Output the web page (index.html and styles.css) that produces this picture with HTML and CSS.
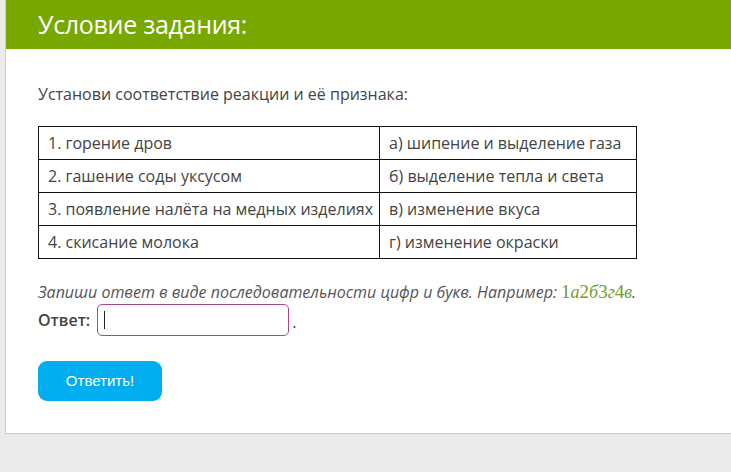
FILE: index.html
```html
<!DOCTYPE html>
<html lang="ru">
<head>
<meta charset="utf-8">
<title>Условие задания</title>
<link rel="stylesheet" href="styles.css">
</head>
<body>
<div class="card">
  <div class="header">Условие задания:</div>
  <div class="content">
    <p class="prompt">Установи соответствие реакции и её признака:</p>
    <table class="match">
      <tr><td class="c1">1. горение дров</td><td class="c2">а) шипение и выделение газа</td></tr>
      <tr><td class="c1">2. гашение соды уксусом</td><td class="c2">б) выделение тепла и света</td></tr>
      <tr><td class="c1">3. появление налёта на медных изделиях</td><td class="c2">в) изменение вкуса</td></tr>
      <tr><td class="c1">4. скисание молока</td><td class="c2">г) изменение окраски</td></tr>
    </table>
    <p class="hint">Запиши ответ в виде последовательности цифр и букв. Например: <span class="ex"><span class="d">1</span><i>а</i><span class="d">2</span><i>б</i><span class="d">3</span><i>г</i><span class="d">4</span><i>в</i></span>.</p>
    <div class="answer">
      <span class="label">Ответ:</span>
      <span class="field"><input class="input" type="text" aria-label="Ответ"></span>
      <span class="dot">.</span>
    </div>
    <button class="btn" type="button">Ответить!</button>
  </div>
</div>
</body>
</html>
```

FILE: styles.css
```css
html, body {
  margin: 0;
  padding: 0;
  background: #ebebeb;
  height: 100%;
}
body {
  font-family: "Open Sans", "Noto Sans", sans-serif;
  color: #444;
  overflow: hidden;
}
.card {
  margin-left: 5px;
  background: #fff;
  border-left: 1px solid #cfcfcf;
  border-bottom: 1px solid #c8c8c8;
}
.header {
  height: 49px;
  background: #78a800;
  color: #fff;
  font-size: 25px;
  line-height: 49px;
  padding-left: 32px;
  letter-spacing: -0.3px;
  box-sizing: border-box;
  padding-bottom: 3px;
}
.content {
  padding: 34px 32px 32px 32px;
}
.prompt {
  margin: 0;
  font-size: 16px;
  line-height: 22px;
}
.match {
  margin-top: 21px;
  border-collapse: collapse;
  font-size: 16px;
}
.match td {
  border: 1px solid #111;
  height: 33px;
  padding: 0 0 1px 9px;
  line-height: 22px;
  box-sizing: border-box;
  white-space: nowrap;
}
.match .c1 { width: 341px; padding-right: 4px; }
.match .c2 { width: 257px; }
.hint {
  margin: 22px 0 0 0;
  font-size: 16px;
  line-height: 22px;
  font-style: italic;
  color: #555;
}
.ex {
  font-family: "Liberation Serif", "DejaVu Serif", serif;
  font-style: normal;
  font-size: 19px;
  color: #6f9e2b;
}
.ex .d { font-style: normal; }
.ex i { font-style: italic; font-size: 18px; }
.answer {
  display: flex;
  align-items: center;
  margin-top: 1px;
  height: 32px;
}
.label {
  font-weight: 600;
  font-size: 16px;
  color: #444;
  margin-right: 7px;
}
.field {
  position: relative;
  display: block;
  width: 192px;
  height: 32px;
}
.field::after {
  content: "";
  position: absolute;
  left: 7px;
  top: 7px;
  width: 1px;
  height: 18px;
  background: #222;
}
.input {
  display: block;
  width: 192px;
  height: 32px;
  box-sizing: border-box;
  border: 1.5px solid #a54a86;
  border-radius: 5px;
  padding: 0 8px;
  font: 16px "Open Sans", sans-serif;
  outline: none;
  background: #fff;
}
.dot {
  margin-left: 3px;
  font-size: 16px;
  align-self: flex-end;
  line-height: 22px;
  padding-bottom: 3px;
}
.btn {
  display: block;
  margin-top: 25px;
  width: 124px;
  height: 40px;
  border: none;
  border-radius: 9px;
  background: #00adef;
  color: #fff;
  font-family: "Liberation Sans", Arial, sans-serif;
  font-size: 15px;
  padding: 0 0 2px 0;
  cursor: pointer;
}
```
